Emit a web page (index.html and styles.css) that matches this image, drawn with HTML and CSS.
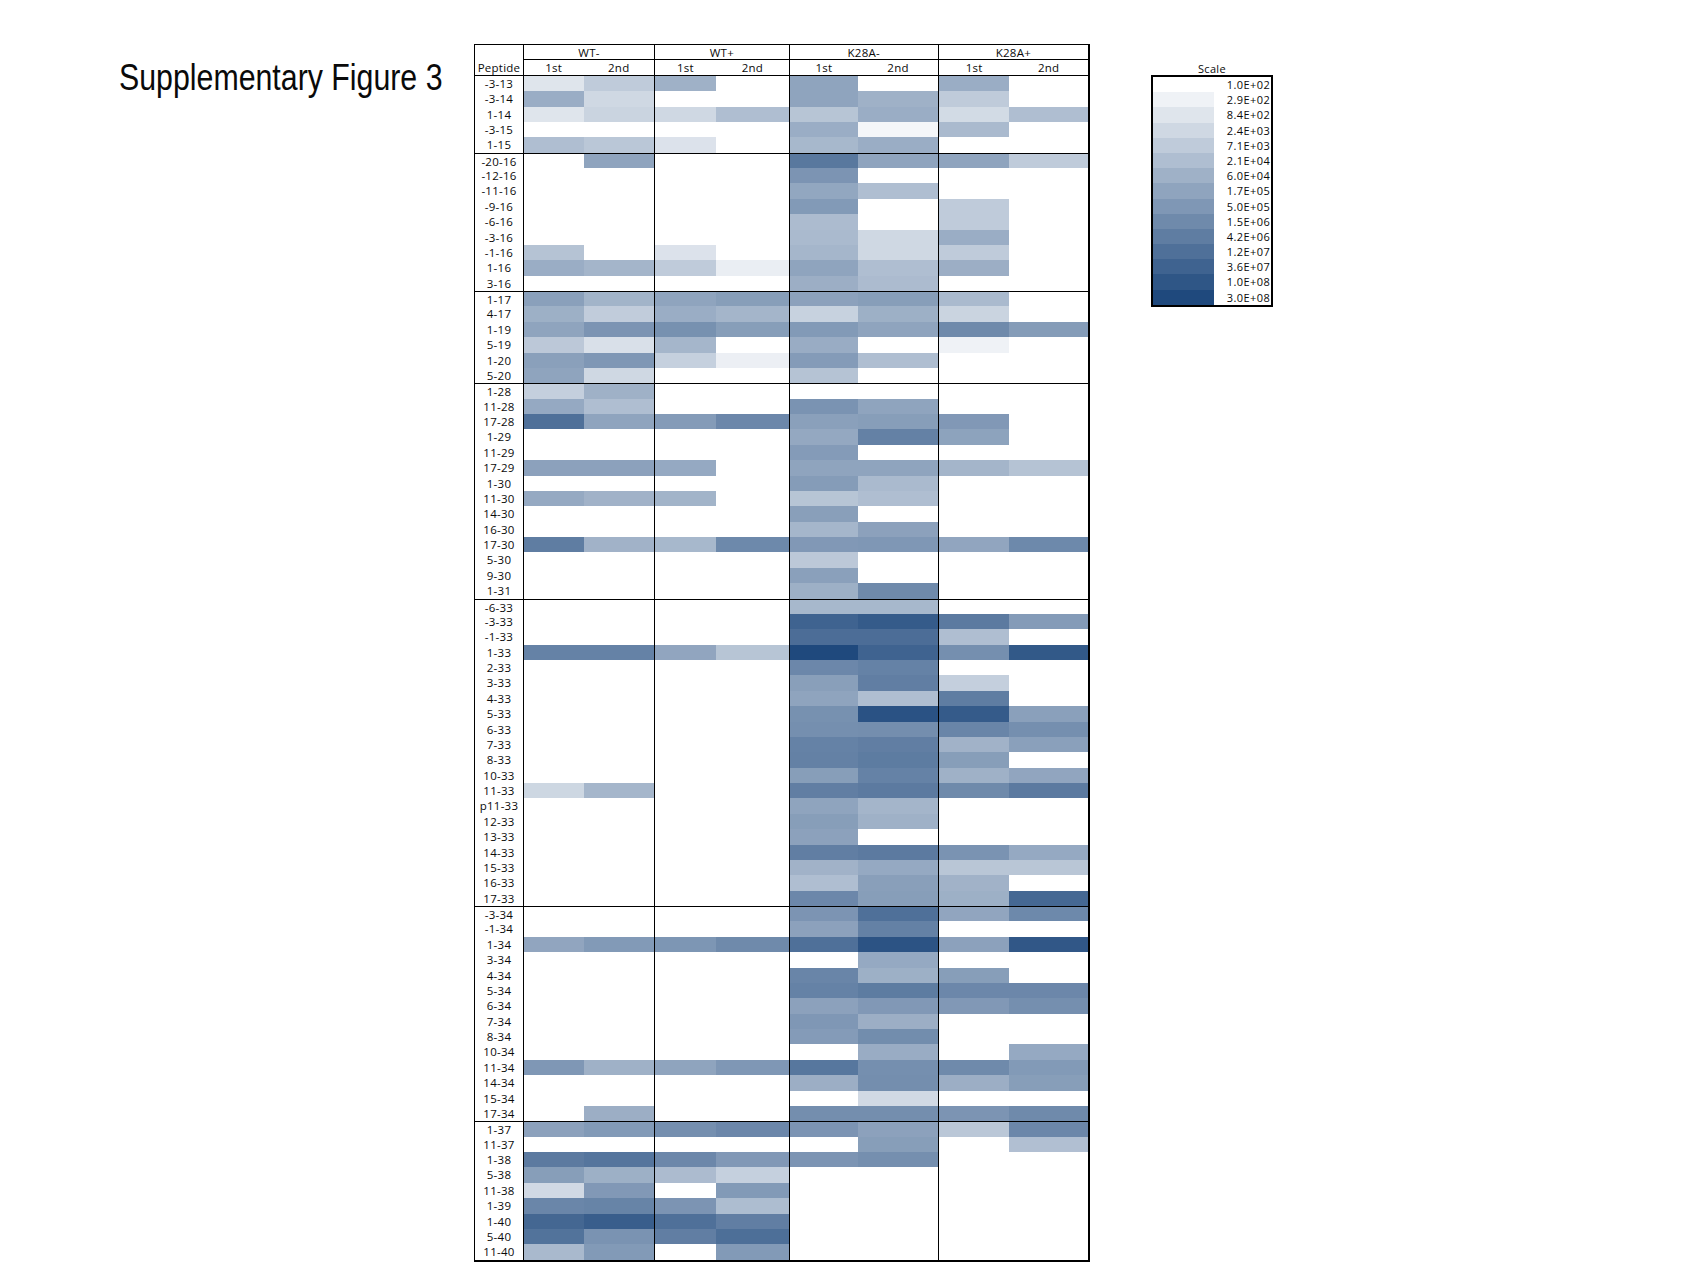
FILE: index.html
```html
<!DOCTYPE html>
<html lang="en">
<head>
<meta charset="utf-8">
<title>Supplementary Figure 3</title>
<link rel="stylesheet" href="styles.css">
</head>
<body>
<div class="page">
  <h1 class="title">Supplementary Figure 3</h1>
  <div class="heat" id="heat">
    <div class="corner">Peptide</div>
    <div class="grp gl">WT-</div>
    <div class="grp gl">WT+</div>
    <div class="grp gl">K28A-</div>
    <div class="grp gl">K28A+</div>
    <div class="sub gl">1st</div><div class="sub">2nd</div>
    <div class="sub gl">1st</div><div class="sub">2nd</div>
    <div class="sub gl">1st</div><div class="sub">2nd</div>
    <div class="sub gl">1st</div><div class="sub">2nd</div>
  </div>
  <div class="legend">
    <div class="legend-title">Scale</div>
    <div class="legend-box">
      <div class="sw s0"></div><div class="lab">1.0E+02</div>
      <div class="sw s1"></div><div class="lab">2.9E+02</div>
      <div class="sw s2"></div><div class="lab">8.4E+02</div>
      <div class="sw s3"></div><div class="lab">2.4E+03</div>
      <div class="sw s4"></div><div class="lab">7.1E+03</div>
      <div class="sw s5"></div><div class="lab">2.1E+04</div>
      <div class="sw s6"></div><div class="lab">6.0E+04</div>
      <div class="sw s7"></div><div class="lab">1.7E+05</div>
      <div class="sw s8"></div><div class="lab">5.0E+05</div>
      <div class="sw s9"></div><div class="lab">1.5E+06</div>
      <div class="sw s10"></div><div class="lab">4.2E+06</div>
      <div class="sw s11"></div><div class="lab">1.2E+07</div>
      <div class="sw s12"></div><div class="lab">3.6E+07</div>
      <div class="sw s13"></div><div class="lab">1.0E+08</div>
      <div class="sw s14"></div><div class="lab">3.0E+08</div>
    </div>
  </div>
</div>
<script src="script.js"></script>
</body>
</html>
```

FILE: styles.css
```css
html, body {
  margin: 0;
  padding: 0;
  background: #ffffff;
}

.page {
  display: flex;
  align-items: flex-start;
  padding: 44px 0 0 119px;
  color: #0a0a0a;
}

.title {
  flex: none;
  width: 355px;
  margin: 15.5px 0 0 0;
  font: 400 36px/1 "Liberation Sans", Arial, sans-serif;
  white-space: nowrap;
  transform: scaleX(0.842);
  transform-origin: 0 0;
}

.heat {
  flex: none;
  display: grid;
  grid-template-columns: 48px 60.5px 70.5px 62px 72.7px 69.6px 79.5px 71.6px 78.6px;
  grid-auto-rows: 15.39px;
  border: 1px solid #000;
  border-right-width: 2px;
  border-bottom-width: 2px;
  font: 400 11.5px/15.39px "Open Sans", "Liberation Sans", sans-serif;
  letter-spacing: 0.25px;
}

.heat > div {
  box-sizing: border-box;
  min-width: 0;
}

.corner {
  grid-row: 1 / span 2;
  display: flex;
  align-items: flex-end;
  justify-content: center;
  border-bottom: 1px solid #000;
  line-height: 15px;
}

.grp {
  grid-column: span 2;
  text-align: center;
  border-bottom: 1px solid #000;
}

.sub {
  text-align: center;
  border-bottom: 1px solid #000;
}

.gl {
  border-left: 1px solid #000;
}

.pep {
  text-align: center;
  white-space: nowrap;
}

.gtop {
  border-top: 1px solid #000;
}

.cell {
  background: #ffffff;
}

.legend {
  flex: none;
  margin: 18px 0 0 60.7px;
  width: 122.6px;
  font: 400 11px/13px "Open Sans", "Liberation Sans", sans-serif;
  letter-spacing: 0.45px;
}

.legend-title {
  text-align: center;
  letter-spacing: 0.3px;
}

.legend-box {
  display: grid;
  grid-template-columns: 61px 1fr;
  grid-auto-rows: 15.2px;
  border: 2px solid #000;
}

.lab {
  text-align: right;
  line-height: 15.2px;
  padding-right: 1px;
}

.s0 { background: #ffffff; }
.s1 { background: #eff2f6; }
.s2 { background: #dfe5ec; }
.s3 { background: #cfd8e3; }
.s4 { background: #bfcbda; }
.s5 { background: #afbed1; }
.s6 { background: #9fb1c7; }
.s7 { background: #8fa4be; }
.s8 { background: #7f97b5; }
.s9 { background: #6f8aab; }
.s10 { background: #5f7da2; }
.s11 { background: #4f7099; }
.s12 { background: #3f6390; }
.s13 { background: #2f5686; }
.s14 { background: #1f497d; }
```

FILE: script.js
```js
const data = [
  ["-3-13", [2,4,6,0,7,0,6.3,0]],
  ["-3-14", [6.3,3,0,0,7,6,4,0]],
  ["1-14", [2,3.3,3,5,4.5,6.3,2.8,5]],
  ["-3-15", [0,0,0,0,6.3,0.7,5.3,0]],
  ["1-15", [5,4.3,2.2,0,5.5,6.3,0,0]],
  ["-20-16", [0,7,0,0,10.4,7,7,4]],
  ["-12-16", [0,0,0,0,8.2,0,0,0]],
  ["-11-16", [0,0,0,0,6.8,5,0,0]],
  ["-9-16", [0,0,0,0,7.8,0,4,0]],
  ["-6-16", [0,0,0,0,5.2,0,4,0]],
  ["-3-16", [0,0,0,0,5.3,3,6.3,0]],
  ["-1-16", [4.6,0,2.2,0,5.6,3,4,0]],
  ["1-16", [6.3,5.7,4,1.3,7,5,6.2,0]],
  ["3-16", [0,0,0,0,6.2,5.2,0,0]],
  ["1-17", [7.3,5.8,7,7.5,7.2,7.5,5.3,0]],
  ["4-17", [6.1,3.9,6.3,5.7,3.5,6.1,3.3,0]],
  ["1-19", [7,8.2,8.5,7.5,7.8,7,9,7.6]],
  ["5-19", [4.2,2.4,5.6,0,6.4,0,1,0]],
  ["1-20", [7.3,8,3.6,1.2,7.7,5,0,0]],
  ["5-20", [7,3,0,0,4.6,0,0,0]],
  ["1-28", [3.7,6,0,0,0,0,0,0]],
  ["11-28", [6.6,5,0,0,8.3,7,0,0]],
  ["17-28", [11,7,7.7,9.2,7.3,7.5,7.9,0]],
  ["1-29", [0,0,0,0,6.7,9.7,7.1,0]],
  ["11-29", [0,0,0,0,7.7,0,0,0]],
  ["17-29", [7.2,7.2,6.6,0,7,7,5.7,4.6]],
  ["1-30", [0,0,0,0,7.6,5.3,0,0]],
  ["11-30", [6.6,5.9,5.8,0,4.5,5,0,0]],
  ["14-30", [0,0,0,0,7.4,0,0,0]],
  ["16-30", [0,0,0,0,5.6,7.2,0,0]],
  ["17-30", [10,5.9,5.5,9.1,7.9,8,6.9,9.1]],
  ["5-30", [0,0,0,0,4.2,0,0,0]],
  ["9-30", [0,0,0,0,7.3,0,0,0]],
  ["1-31", [0,0,0,0,6.1,9,0,0]],
  ["-6-33", [0,0,0,0,5.5,5.5,0,0]],
  ["-3-33", [0,0,0,0,12,12.6,10.2,7.7]],
  ["-1-33", [0,0,0,0,11.2,11.2,5,0]],
  ["1-33", [9.6,9.6,6.9,4.5,14,12,8.6,12.8]],
  ["2-33", [0,0,0,0,9.2,9.6,0,0]],
  ["3-33", [0,0,0,0,7.4,9.9,3.7,0]],
  ["4-33", [0,0,0,0,7,5,10,0]],
  ["5-33", [0,0,0,0,8.5,13.3,12.6,7.3]],
  ["6-33", [0,0,0,0,8.6,8.7,9.4,8.6]],
  ["7-33", [0,0,0,0,9.6,9.9,5.9,7.3]],
  ["8-33", [0,0,0,0,9.7,10.1,7.5,0]],
  ["10-33", [0,0,0,0,7.5,9.6,6,6.9]],
  ["11-33", [3.1,5.6,0,0,9.9,10.2,9,10.2]],
  ["p11-33", [0,0,0,0,7,5.7,0,0]],
  ["12-33", [0,0,0,0,7.5,6,0,0]],
  ["13-33", [0,0,0,0,7.2,0,0,0]],
  ["14-33", [0,0,0,0,9.9,10.2,8.3,6.6]],
  ["15-33", [0,0,0,0,5.9,6.6,4.4,4.4]],
  ["16-33", [0,0,0,0,5,7.4,5.9,0]],
  ["17-33", [0,0,0,0,9.2,7.5,6.1,11.6]],
  ["-3-34", [0,0,0,0,8.2,11,6.9,9.1]],
  ["-1-34", [0,0,0,0,7.2,9.7,0,0]],
  ["1-34", [6.9,7.8,8.1,9,11,13.2,7.2,12.9]],
  ["3-34", [0,0,0,0,0,6.6,0,0]],
  ["4-34", [0,0,0,0,9.4,6.1,7.5,0]],
  ["5-34", [0,0,0,0,9.6,10.1,9.2,9.2]],
  ["6-34", [0,0,0,0,7.2,7.9,7.9,8.6]],
  ["7-34", [0,0,0,0,8,6.2,0,0]],
  ["8-34", [0,0,0,0,7.7,8.8,0,0]],
  ["10-34", [0,0,0,0,0,6.4,0,6.6]],
  ["11-34", [8,6,7,8,10.5,8.6,9,7.8]],
  ["14-34", [0,0,0,0,6.2,8.7,6.2,7.5]],
  ["15-34", [0,0,0,0,0,2.9,0,0]],
  ["17-34", [0,6.2,0,0,8.7,8.7,8.2,9]],
  ["1-37", [7.2,7.8,8.6,9.2,8.2,7.2,4.3,9.2]],
  ["11-37", [0,0,0,0,0,7.5,0,4.9]],
  ["1-38", [10.2,10.6,9.2,7.9,8.2,8.6,0,0]],
  ["5-38", [7.5,6.1,5.2,3.6,0,0,0,0]],
  ["11-38", [2.9,7.9,0,7.8,0,0,0,0]],
  ["1-39", [9.3,9.5,8.2,5.1,0,0,0,0]],
  ["1-40", [11.7,12.4,11,9.9,0,0,0,0]],
  ["5-40", [10.8,8.3,9.9,11.1,0,0,0,0]],
  ["11-40", [5.4,7.8,0,7.8,0,0,0,0]]
];

const groupStarts = new Set(["-20-16", "1-17", "1-28", "-6-33", "-3-34", "1-37"]);

function scaleColor(v) {
  const t = Math.max(0, Math.min(14, v)) / 14;
  const r = Math.round(255 + (31 - 255) * t);
  const g = Math.round(255 + (73 - 255) * t);
  const b = Math.round(255 + (125 - 255) * t);
  return "rgb(" + r + "," + g + "," + b + ")";
}

const grid = document.getElementById("heat");
const frag = document.createDocumentFragment();
data.forEach(function (row) {
  const label = row[0];
  const vals = row[1];
  const gs = groupStarts.has(label);
  const pep = document.createElement("div");
  pep.className = "pep" + (gs ? " gtop" : "");
  pep.textContent = label;
  frag.appendChild(pep);
  vals.forEach(function (v, i) {
    const c = document.createElement("div");
    c.className = "cell" + (i % 2 === 0 ? " gl" : "") + (gs ? " gtop" : "");
    if (v > 0) c.style.backgroundColor = scaleColor(v);
    frag.appendChild(c);
  });
});
grid.appendChild(frag);
```
